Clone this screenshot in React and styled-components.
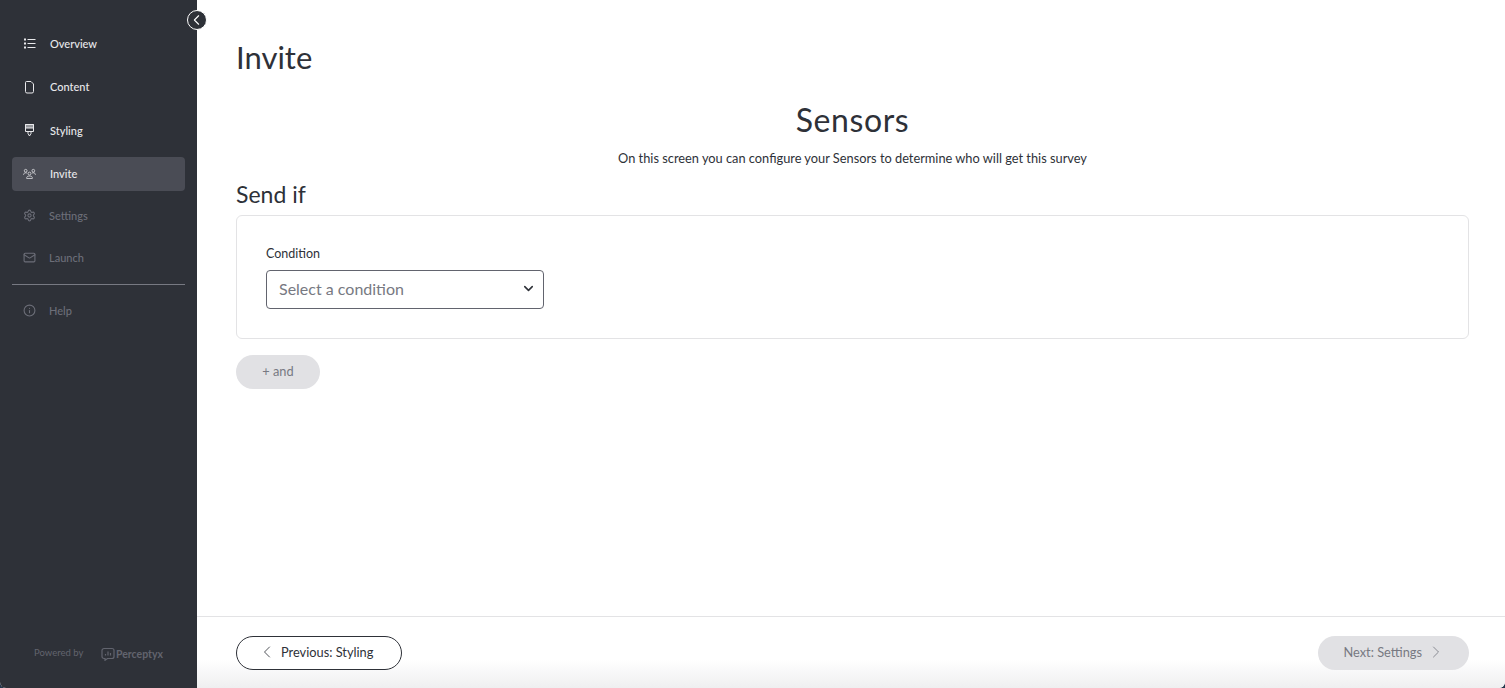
import React from 'react'
import styled, { createGlobalStyle } from 'styled-components'
import { ChevronDown, ChevronLeft, ChevronRight, Info, Mail, Settings } from 'lucide-react'

const GlobalStyle = createGlobalStyle`
  html, body {
    margin: 0;
    height: 100%;
    background: #24364c;
    overflow: hidden;
  }
  * {
    box-sizing: border-box;
  }
  body {
    font-family: "Lato", "Noto Sans", sans-serif;
    color: #2e3138;
  }
`

const Page = styled.div`
  display: flex;
  width: 1505px;
  height: 688px;
  background: #fff;
  border-radius: 0 0 6px 6px;
  overflow: hidden;
`

const Sidebar = styled.aside`
  flex: 0 0 197px;
  display: flex;
  flex-direction: column;
  padding: 26px 12px 0;
  background: #2e3138;
`

const CollapseButton = styled.button`
  position: absolute;
  top: 10px;
  left: 187px;
  display: flex;
  align-items: center;
  justify-content: center;
  width: 20px;
  height: 20px;
  padding: 0 1px 0 0;
  border: 1.5px solid #fff;
  border-radius: 50%;
  background: #2e3138;
  color: #fff;
`

const NavItem = styled.div`
  display: flex;
  align-items: center;
  gap: ${p => (p.$disabled ? '13px' : '14px')};
  height: 34px;
  margin-bottom: ${p => p.$gap}px;
  padding-left: 11px;
  border-radius: 4px;
  font-size: 11px;
  font-weight: 500;
  background: ${p => (p.$active ? '#4a4c55' : 'transparent')};
  color: ${p => (p.$disabled ? '#6c6e78' : '#e9e9ec')};
`

const NavIcon = styled.span`
  display: flex;
  justify-content: center;
  width: 13px;
`

const Divider = styled.hr`
  width: 100%;
  height: 1px;
  margin: 0 0 9px;
  border: 0;
  background: #777982;
`

const PoweredBy = styled.div`
  display: flex;
  align-items: center;
  margin-top: auto;
  margin-bottom: 27px;
  padding-left: 22px;
  color: #62646e;
`

const PoweredLabel = styled.span`
  width: 67px;
  font-size: 9.5px;
  padding-bottom: 3px;
`

const Brand = styled.span`
  display: flex;
  align-items: center;
  gap: 1px;
  font-size: 10.5px;
  font-weight: 700;
`

const Main = styled.main`
  flex: 1;
  display: flex;
  flex-direction: column;
  min-width: 0;
`

const Content = styled.div`
  flex: 1;
  padding: 37px 36px 0 39px;
`

const PageTitle = styled.h1`
  margin: 0;
  font-size: 31px;
  line-height: 40px;
  font-weight: 400;
`

const SectionTitle = styled.h2`
  margin: 23px 0 0;
  font-size: 32px;
  line-height: 40px;
  font-weight: 400;
  letter-spacing: 0.6px;
  text-align: center;
`

const Subtitle = styled.p`
  margin: 10px 0 0;
  font-size: 12.8px;
  line-height: 16px;
  text-align: center;
`

const SendTitle = styled.h3`
  margin: 14px 0 7px;
  font-size: 23px;
  line-height: 28px;
  font-weight: 400;
`

const ConditionCard = styled.section`
  height: 124px;
  padding: 29px;
  border: 1px solid #e3e3e5;
  border-radius: 6px;
`

const FieldLabel = styled.label`
  display: block;
  margin-bottom: 8px;
  font-size: 12.5px;
  line-height: 17px;
`

const SelectBox = styled.div`
  display: flex;
  align-items: center;
  justify-content: space-between;
  width: 278px;
  height: 39px;
  padding: 0 7px 2px 12px;
  border: 1px solid #62646e;
  border-radius: 4px;
  font-size: 16px;
  color: #777982;
`

const Pill = styled.button`
  display: inline-flex;
  align-items: center;
  justify-content: ${p => p.$justify || 'center'};
  gap: 4px;
  width: ${p => p.$width}px;
  height: 34px;
  padding: ${p => p.$padding || '0 0 3px'};
  border: ${p => (p.$outline ? '1px solid #2e3138' : '0')};
  border-radius: 17px;
  background: ${p => (p.$outline ? '#fff' : '#e1e1e4')};
  color: ${p => (p.$outline ? '#2e3138' : '#777982')};
  font-family: inherit;
  font-size: 12.8px;
`

const AndButton = styled(Pill)`
  margin-top: 16px;
  font-size: 12.8px;
`

const Footer = styled.footer`
  display: flex;
  align-items: flex-start;
  justify-content: space-between;
  height: 72px;
  padding: 19px 36px 0 39px;
  border-top: 1px solid #e3e3e5;
  background: linear-gradient(#fff 60%, #efeff0);
`

const ListIcon = () => (
  <svg width="13" height="13" viewBox="0 0 13 13" fill="none" stroke="currentColor">
    <path d="M4.500 2.500H12.500M4.500 6.500H12.500M4.500 10.500H12.500" />
    <path d="M1 2.500h2M1 6.500h2M1 10.500h2" strokeWidth="2" />
  </svg>
)

const PageIcon = () => (
  <svg width="13" height="14" viewBox="0 0 13 14" fill="none" stroke="currentColor">
    <path d="M3.500 1.500H8l2.500 2.500v7.500a1.500 1.500 0 0 1-1.500 1.500H4a1.500 1.500 0 0 1-1.500-1.500v-9a1 1 0 0 1 1-1z" />
  </svg>
)

const BrushIcon = () => (
  <svg width="13" height="14" viewBox="0 0 13 14" fill="none" stroke="currentColor">
    <path d="M2.500 1.500h8v7h-8z" />
    <path d="M2.500 1.500h8v3.500h-8z" fill="currentColor" fillOpacity="0.55" />
    <path d="M5 8.500v2l1.500 2.500L8 10.500v-2" />
  </svg>
)

const PeopleIcon = () => (
  <svg width="16" height="14" viewBox="0 0 16 14" fill="none" stroke="currentColor" strokeWidth="0.9">
    <circle cx="3.300" cy="3" r="1.700" />
    <circle cx="12.700" cy="3" r="1.700" />
    <circle cx="8" cy="6.500" r="1.800" />
    <path d="M0.700 8c0-1.500 1-2.500 2.600-2.500 0.700 0 1.300 0.200 1.700 0.500M15.300 8c0-1.500-1-2.500-2.600-2.500-0.700 0-1.300 0.200-1.700 0.500" />
    <path d="M4.500 12.500v-0.800c0-1.300 1.200-2.200 3.500-2.200s3.500 0.900 3.500 2.200v0.800z" />
  </svg>
)

const BrandIcon = () => (
  <svg width="14" height="14" viewBox="0 0 14 14" fill="none" stroke="currentColor" strokeWidth="1.200">
    <path d="M3 1.500h8a2 2 0 0 1 2 2v6a2 2 0 0 1-2 2H6.500L4 13.300V11.500H3a2 2 0 0 1-2-2v-6a2 2 0 0 1 2-2z" />
    <path d="M4.500 8.500V7M7 8.500v-4M9.500 8.500V6" />
  </svg>
)

const navItems = [
  { label: 'Overview', icon: <ListIcon />, gap: 9.5 },
  { label: 'Content', icon: <PageIcon />, gap: 9.5 },
  { label: 'Styling', icon: <BrushIcon />, gap: 9.5 },
  { label: 'Invite', icon: <PeopleIcon />, active: true, gap: 8 },
  { label: 'Settings', icon: <Settings size={13} />, disabled: true, gap: 8 },
  { label: 'Launch', icon: <Mail size={13} />, disabled: true, gap: 9 }
]

const App = () => (
  <>
    <GlobalStyle />
    <Page>
      <Sidebar>
        <CollapseButton>
          <ChevronLeft size={18} strokeWidth={1.5} />
        </CollapseButton>
        {navItems.map(item => (
          <NavItem key={item.label} $active={item.active} $disabled={item.disabled} $gap={item.gap}>
            <NavIcon>{item.icon}</NavIcon>
            {item.label}
          </NavItem>
        ))}
        <Divider />
        <NavItem $disabled $gap={0}>
          <NavIcon><Info size={13} /></NavIcon>
          Help
        </NavItem>
        <PoweredBy>
          <PoweredLabel>Powered by</PoweredLabel>
          <Brand>
            <BrandIcon />
            Perceptyx
          </Brand>
        </PoweredBy>
      </Sidebar>
      <Main>
        <Content>
          <PageTitle>Invite</PageTitle>
          <SectionTitle>Sensors</SectionTitle>
          <Subtitle>On this screen you can configure your Sensors to determine who will get this survey</Subtitle>
          <SendTitle>Send if</SendTitle>
          <ConditionCard>
            <FieldLabel>Condition</FieldLabel>
            <SelectBox>
              Select a condition
              <ChevronDown size={15} color="#2e3138" strokeWidth={2.5} />
            </SelectBox>
          </ConditionCard>
          <AndButton $width={84}>+ and</AndButton>
        </Content>
        <Footer>
          <Pill $outline $width={166} $justify="flex-start" $padding="0 0 3px 20px">
            <ChevronLeft size={20} strokeWidth={1} />
            Previous: Styling
          </Pill>
          <Pill $width={151} $justify="flex-end" $padding="0 23px 3px 0">
            Next: Settings
            <ChevronRight size={20} strokeWidth={1} />
          </Pill>
        </Footer>
      </Main>
    </Page>
  </>
)

export default App
